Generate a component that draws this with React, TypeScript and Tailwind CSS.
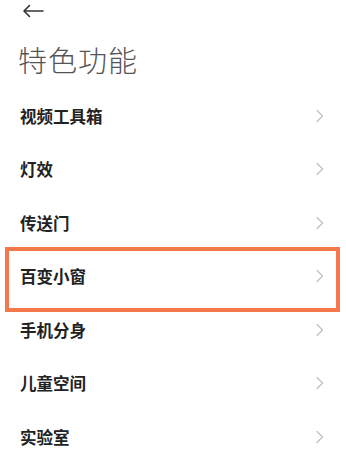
const items = ['视频工具箱', '灯效', '传送门', '百变小窗', '手机分身', '儿童空间', '实验室'];

function Chevron() {
  return (
    <svg width="10" height="14" viewBox="0 0 10 14" fill="none">
      <path d="M2 1.5 L7.5 7 L2 12.5" stroke="#c2c2c2" strokeWidth="1.4" strokeLinecap="round" strokeLinejoin="round" />
    </svg>
  );
}

export default function App() {
  return (
    <div
      className="w-[346px] h-[458px] overflow-hidden bg-white"
      style={{ fontFamily: '"Noto Sans CJK SC", "Noto Sans", sans-serif' }}
    >
      {/* header */}
      <div className="h-[22px] pl-[22px] pt-[4px]">
        <svg width="22" height="14" viewBox="0 0 22 14" fill="none">
          <path d="M21 7 H2 M7.5 1.5 L2 7 L7.5 12.5" stroke="#333" strokeWidth="1.6" strokeLinecap="round" strokeLinejoin="round" />
        </svg>
      </div>
      <h1 className="pl-[18px] mt-[19px] h-[48px] text-[29px] leading-[36px] font-light text-[#555] tracking-[1px]">
        特色功能
      </h1>

      <ul>
        {items.map((label, i) => (
          <li key={label} className="relative h-[53.5px] flex items-center justify-between pl-[20px] pr-[21px]">
            <span className="text-[16.5px] font-bold text-[#222] leading-none">{label}</span>
            <Chevron />
            {i === 3 && (
              <div className="absolute left-[5px] right-[6px] top-[-3px] bottom-[-8.5px] border-[4px] border-[#f4784a] pointer-events-none" />
            )}
          </li>
        ))}
      </ul>
    </div>
  );
}
